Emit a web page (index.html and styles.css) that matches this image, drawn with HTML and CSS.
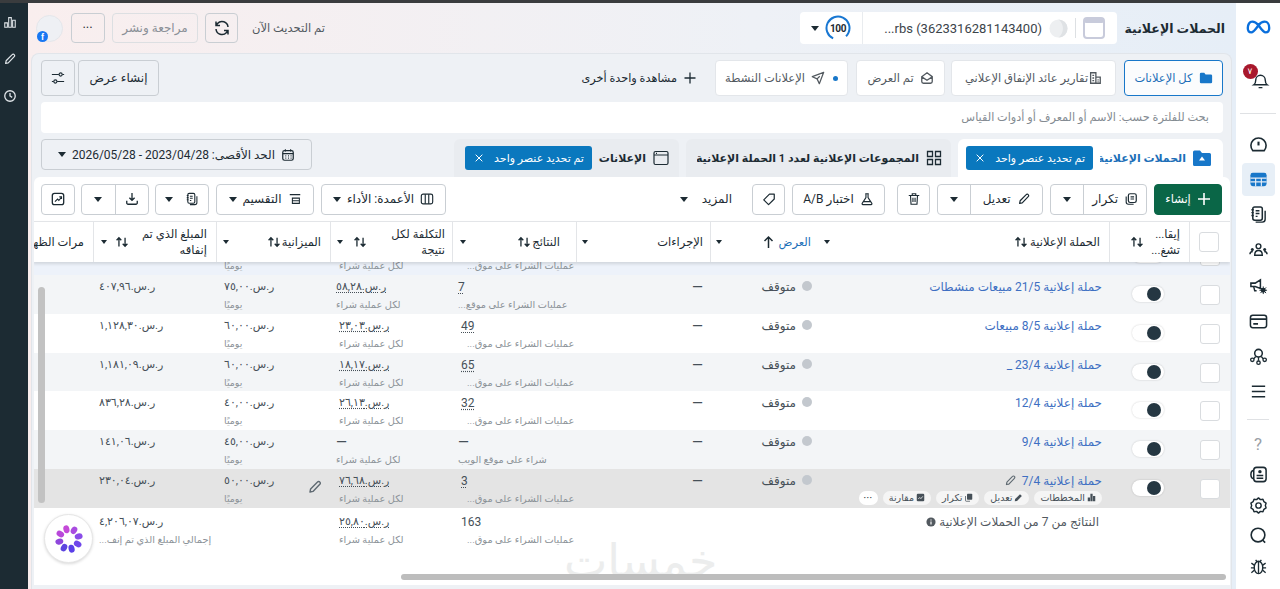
FILE: index.html
```html
<!DOCTYPE html>
<html lang="ar" dir="rtl">
<head>
<meta charset="utf-8">
<title>الحملات الإعلانية</title>
<link rel="stylesheet" href="styles.css">
</head>
<body>
<svg class="defs" aria-hidden="true">
  <symbol id="i-pen" viewBox="0 0 16 16"><path d="M3 13l.6-3L10.500 3a1.500 1.500 0 0 1 2.300 0 1.500 1.500 0 0 1 0 2.300L6 12.400z" fill="none" stroke="currentColor" stroke-width="1.400" stroke-linejoin="round"/></symbol>
  <symbol id="i-dup" viewBox="0 0 16 16"><rect x="5" y="2" width="9" height="10" rx="2" fill="none" stroke="currentColor" stroke-width="1.400"/><path d="M2.500 5v6.500A2.500 2.500 0 0 0 5 14h6M7.500 5.500h4M7.500 8h4" fill="none" stroke="currentColor" stroke-width="1.300"/></symbol>
  <symbol id="i-docs" viewBox="0 0 20 20"><rect x="4" y="2" width="10" height="14" rx="2" fill="none" stroke="currentColor" stroke-width="1.600"/><path d="M7 6h4M7 9h4M7 12h2M2.500 5h2.500M2.500 8h2.500M2.500 11h2.500M17 6v9a3 3 0 0 1-3 3H7" fill="none" stroke="currentColor" stroke-width="1.500"/></symbol>
  <symbol id="i-sort" viewBox="0 0 16 16"><path d="M4.500 13V3.500M1.800 6l2.700-2.800L7.200 6M11.500 3v9.500M8.800 10l2.700 2.800L14.200 10" fill="none" stroke="currentColor" stroke-width="1.500"/></symbol>
  <symbol id="i-x" viewBox="0 0 12 12"><path d="M2 2l8 8M10 2l-8 8" stroke="currentColor" stroke-width="1.200" fill="none"/></symbol>
</svg>
<div class="topline"></div>
<div class="app">
  <nav class="nav">
    <div class="nav-slot nav-meta"><svg class="meta" viewBox="0 0 28 18"><path d="M7 2.500C4 2.500 2 5.500 2 9.500c0 3 1.500 5 4 5 2.500 0 4-2.500 8-8 3-4 5-4 7-4 3 0 5 3 5 7 0 3-1.500 5-4 5-2.500 0-4.500-3-8-8C11.500 3.500 9.500 2.500 7 2.500z" fill="none" stroke="#0a6fdc" stroke-width="2.600"/></svg></div>
    <div class="nav-slot nav-bell">
      <svg class="ni" viewBox="0 0 20 20"><path d="M3 14.500c1.500-1 2-2.500 2-5a5 5 0 0 1 10 0c0 2.500.5 4 2 5zM8 17.500h4" fill="none" stroke="currentColor" stroke-width="1.500"/></svg>
      <span class="badge">٧</span>
    </div>
    <div class="nav-div"></div>
    <div class="nav-slot"><svg class="ni" viewBox="0 0 20 20"><path d="M4 16.500a8 8 0 1 1 12 0z" fill="none" stroke="currentColor" stroke-width="1.700"/><path d="M10 7v4" stroke="currentColor" stroke-width="2.200"/></svg></div>
    <div class="nav-slot nav-active"><svg class="ni" viewBox="0 0 20 20"><rect x="1.500" y="3" width="17" height="14" rx="2.500" fill="#1877c9"/><path d="M1.500 8.500h17M1.500 12.500h17M7 8.500V17M13 8.500V17" stroke="#e7eef6" stroke-width="1.200"/></svg></div>
    <div class="nav-slot"><svg class="ni" viewBox="0 0 20 20"><use href="#i-docs"/></svg></div>
    <div class="nav-slot"><svg class="ni" viewBox="0 0 20 20"><circle cx="10" cy="5.500" r="2.500" fill="none" stroke="currentColor" stroke-width="1.500"/><path d="M6 15c0-3 1.500-5 4-5s4 2 4 5z" fill="none" stroke="currentColor" stroke-width="1.500"/><circle cx="3.500" cy="9" r="1.600" fill="currentColor"/><circle cx="16.500" cy="9" r="1.600" fill="currentColor"/><path d="M1 14c0-2 1-3 3-3M19 14c0-2-1-3-3-3" fill="none" stroke="currentColor" stroke-width="1.500"/></svg></div>
    <div class="nav-slot"><svg class="ni" viewBox="0 0 20 20"><path d="M2 7.500h4.500L12 4v9L6.500 11H2z" fill="none" stroke="currentColor" stroke-width="1.600"/><path d="M5 11.500l1 4h2" fill="none" stroke="currentColor" stroke-width="1.500"/><circle cx="15" cy="15" r="2.600" fill="currentColor"/><path d="M15 11v8M11 15h8M12 12l6 6M18 12l-6 6" stroke="currentColor" stroke-width="1"/></svg></div>
    <div class="nav-slot"><svg class="ni" viewBox="0 0 20 20"><rect x="1.500" y="3.500" width="17" height="13" rx="2.500" fill="none" stroke="currentColor" stroke-width="1.600"/><path d="M1.500 7.500h17M4.500 12.500h5" stroke="currentColor" stroke-width="1.600"/></svg></div>
    <div class="nav-slot"><svg class="ni" viewBox="0 0 20 20"><circle cx="10" cy="6.500" r="4" fill="none" stroke="currentColor" stroke-width="1.600"/><circle cx="3.500" cy="13.500" r="1.800" fill="none" stroke="currentColor" stroke-width="1.400"/><circle cx="16.500" cy="13.500" r="1.800" fill="none" stroke="currentColor" stroke-width="1.400"/><circle cx="10" cy="16.500" r="1.800" fill="none" stroke="currentColor" stroke-width="1.400"/><path d="M10 10.500v4M7 10L5 12.500M13 10l2 2.500" stroke="currentColor" stroke-width="1.400"/></svg></div>
    <div class="nav-slot"><svg class="ni" viewBox="0 0 20 20"><path d="M3 4.500h14M3 10h14M3 15.500h14" stroke="currentColor" stroke-width="1.400"/></svg></div>
    <div class="nav-div nav-div2"></div>
    <div class="nav-slot2 nav-q">?</div>
    <div class="nav-slot2"><svg class="ni" viewBox="0 0 20 20"><rect x="5" y="2.500" width="13" height="15" rx="3" fill="none" stroke="currentColor" stroke-width="1.600"/><path d="M5 5.500C2.500 6 2 8 2 10s.5 4 3 4.500" fill="none" stroke="currentColor" stroke-width="1.600"/><circle cx="11.500" cy="7" r="1.800" fill="currentColor"/><path d="M8 11h7M8 14h7" stroke="currentColor" stroke-width="1.500"/></svg></div>
    <div class="nav-slot2"><svg class="ni" viewBox="0 0 20 20"><path d="M10 2l2 1.800 2.700-.3 1 2.500 2.300 1.500-.8 2.500.8 2.500-2.300 1.500-1 2.500-2.700-.3L10 18l-2-1.800-2.700.3-1-2.500L2 12.500 2.800 10 2 7.500 4.300 6l1-2.500 2.700.3z" fill="none" stroke="currentColor" stroke-width="1.500" stroke-linejoin="round"/><circle cx="10" cy="10" r="2.800" fill="none" stroke="currentColor" stroke-width="1.500"/></svg></div>
    <div class="nav-slot2"><svg class="ni" viewBox="0 0 20 20"><circle cx="9.500" cy="9.500" r="7.200" fill="none" stroke="currentColor" stroke-width="1.700"/><path d="M14.500 15l2.500 2.500" stroke="currentColor" stroke-width="1.700"/></svg></div>
    <div class="nav-slot2"><svg class="ni" viewBox="0 0 20 20"><ellipse cx="10" cy="11" rx="4.500" ry="6.500" fill="none" stroke="currentColor" stroke-width="1.500"/><path d="M10 4.500V17.500M5.500 8.500L2.500 6.500M5.500 11.500H2M5.500 14L2.500 16.500M14.500 8.500l3-2M14.500 11.500H18M14.500 14l3 2.500M7 3l1.500 2M13 3l-1.500 2" fill="none" stroke="currentColor" stroke-width="1.400"/></svg></div>
  </nav>

  <main class="main">
    <header class="head">
      <h1 class="title">الحملات الإعلانية</h1>
      <div class="account">
        <div class="acc-main">
          <svg class="acc-win" viewBox="0 0 22 22"><rect x="1" y="1" width="20" height="20" rx="3" fill="#fff" stroke="#c8cbdb" stroke-width="2"/><rect x="1" y="1" width="20" height="5" rx="2" fill="#c8cbdb"/></svg>
          <span class="acc-sep"></span>
          <svg class="acc-moon" viewBox="0 0 20 20"><circle cx="10" cy="10" r="9.500" fill="#edeff1"/><path d="M10 .5a9.500 9.500 0 0 1 0 19 12 12 0 0 0 0-19z" fill="#dfe2e5"/></svg>
          <span class="acc-name" dir="ltr">...rbs (3623316281143400)</span>
        </div>
        <div class="acc-score">
          <svg class="ring" viewBox="0 0 26 26"><circle cx="13" cy="13" r="11.500" fill="none" stroke="#1877d2" stroke-width="2" stroke-dasharray="58 14" transform="rotate(115 13 13)"/></svg>
          <span class="ring-num" dir="ltr">100</span>
          <span class="caret"></span>
        </div>
      </div>
      <div class="head-left">
        <span class="updated">تم التحديث الآن</span>
        <button class="btn btn-sq head-refresh"><svg class="ic18" viewBox="0 0 18 18"><path d="M15 8A6 6 0 0 0 4.500 4.500L3 6.500M3 10a6 6 0 0 0 10.500 3.500L15 11.500M3 2.500v4h4M15 15.500v-4h-4" fill="none" stroke="currentColor" stroke-width="1.500"/></svg></button>
        <button class="btn btn-review">مراجعة ونشر</button>
        <button class="btn btn-more">•••</button>
        <div class="avatar"><span class="fb">f</span></div>
      </div>
    </header>

    <section class="panel">
      <div class="views">
        <button class="view view-on"><svg class="ic14" viewBox="0 0 16 16"><path d="M1 3.500A1.500 1.500 0 0 1 2.500 2h3.500l1.500 2h6A1.500 1.500 0 0 1 15 5.500v7a1.500 1.500 0 0 1-1.500 1.500h-11A1.500 1.500 0 0 1 1 12.500z" fill="#1877c9"/></svg>كل الإعلانات</button>
        <button class="view view-roi"><svg class="ic14" viewBox="0 0 16 16"><path d="M3 2h6v12H3zM9 7h5v7H9zM5 5h2M5 8h2M5 11h2M11 10h1M11 12h1" fill="none" stroke="currentColor" stroke-width="1.500"/></svg>تقارير عائد الإنفاق الإعلاني</button>
        <button class="view view-seen"><svg class="ic14" viewBox="0 0 16 16"><path d="M2 6.500L8 2l6 4.500V12a2 2 0 0 1-2 2H4a2 2 0 0 1-2-2zM2.500 7L8 10.500 13.500 7" fill="none" stroke="currentColor" stroke-width="1.500"/></svg>تم العرض</button>
        <button class="view view-act"><i class="dot-blue"></i><svg class="ic14" viewBox="0 0 16 16"><path d="M14.500 1.500L1.500 6.500l5.500 2.500 2.500 5.500zM7 9l3-3" fill="none" stroke="currentColor" stroke-width="1.400" stroke-linejoin="round"/></svg>الإعلانات النشطة</button>
        <button class="view-add"><svg class="ic14" viewBox="0 0 14 14"><path d="M7 1.500v11M1.500 7h11" stroke="currentColor" stroke-width="1.300"/></svg>مشاهدة واحدة أخرى</button>
        <div class="views-left">
          <button class="btn btn-view">إنشاء عرض</button>
          <button class="btn btn-sq btn-sliders"><svg class="ic14" viewBox="0 0 16 16"><path d="M1 4h8M13 4h2M1 12h2M7 12h8" stroke="currentColor" stroke-width="1.300"/><circle cx="11" cy="4" r="1.800" fill="none" stroke="currentColor" stroke-width="1.300"/><circle cx="5" cy="12" r="1.800" fill="none" stroke="currentColor" stroke-width="1.300"/></svg></button>
        </div>
      </div>

      <div class="search">بحث للفلترة حسب: الاسم أو المعرف أو أدوات القياس</div>

      <div class="tabs">
        <div class="tab tab-on">
          <svg class="ic18 tab-folder" viewBox="0 0 18 18"><path d="M0 3a1.500 1.500 0 0 1 1.500-1.500H7L9 4h7.500A1.500 1.500 0 0 1 18 5.500v10a1.500 1.500 0 0 1-1.500 1.500h-15A1.500 1.500 0 0 1 0 15.500z" fill="#1877c9"/><path d="M9 7.500l3 4H6z" fill="#fff"/></svg>
          <span class="tab-name tab-name1">الحملات الإعلانية</span>
          <span class="chip"><span>تم تحديد عنصر واحد</span><svg class="ic10" viewBox="0 0 12 12"><use href="#i-x"/></svg></span>
        </div>
        <div class="tab tab-mid">
          <svg class="ic16" viewBox="0 0 16 16"><path d="M1.500 1.500h5v5h-5zM9.500 1.500h5v5h-5zM1.500 9.500h5v5h-5zM9.500 9.500h5v5h-5z" fill="none" stroke="currentColor" stroke-width="1.300"/></svg>
          <span class="tab-name tab-name2">المجموعات الإعلانية لعدد 1 الحملة الإعلانية</span>
        </div>
        <div class="tab tab-ads">
          <svg class="ic16" viewBox="0 0 16 16"><rect x="1" y="1.500" width="14" height="13" rx="1.500" fill="none" stroke="currentColor" stroke-width="1.200"/><path d="M1 5h14M3 3.300h1" stroke="currentColor" stroke-width="1.200"/></svg>
          <span class="tab-name">الإعلانات</span>
          <span class="chip"><span>تم تحديد عنصر واحد</span><svg class="ic10" viewBox="0 0 12 12"><use href="#i-x"/></svg></span>
        </div>
        <button class="btn btn-date"><svg class="ic14" viewBox="0 0 16 16"><rect x="2" y="3" width="12" height="11" rx="2" fill="none" stroke="currentColor" stroke-width="1.400"/><path d="M2 6.500h12M5 1.500V4M11 1.500V4M5 9h1M8 9h1M11 9h1M5 11.500h1M8 11.500h1M11 11.500h1" stroke="currentColor" stroke-width="1.300"/></svg><span>الحد الأقصى: <bdi dir="ltr">2026/05/28 - 2023/04/28</bdi></span><span class="caret"></span></button>
      </div>

      <div class="card">
        <div class="toolbar">
          <button class="btn btn-create"><svg class="ic14" viewBox="0 0 14 14"><path d="M7 1v12M1 7h12" stroke="currentColor" stroke-width="1.600"/></svg>إنشاء</button>
          <div class="split split-dup"><button class="seg seg-main"><svg class="ic14" viewBox="0 0 16 16"><use href="#i-dup"/></svg>تكرار</button><button class="seg seg-car"><span class="caret"></span></button></div>
          <div class="split split-edit"><button class="seg seg-main"><svg class="ic14" viewBox="0 0 16 16"><use href="#i-pen"/></svg>تعديل</button><button class="seg seg-car"><span class="caret"></span></button></div>
          <button class="btn btn-sq btn-del"><svg class="ic14" viewBox="0 0 16 16"><path d="M2 4h12M6 4V2h4v2M4 4l.6 10h6.800L12 4M6.800 6.500v5M9.200 6.500v5" fill="none" stroke="currentColor" stroke-width="1.300"/></svg></button>
          <span class="tb-sep"></span>
          <button class="btn btn-ab"><svg class="ic14" viewBox="0 0 16 16"><path d="M6 2h4M6.800 2v4.500L2.500 13a1 1 0 0 0 .8 1.500h9.400a1 1 0 0 0 .8-1.500L9.200 6.500V2M4.500 11h7" fill="none" stroke="currentColor" stroke-width="1.300"/></svg>اختبار A/B</button>
          <button class="btn btn-sq btn-tag"><svg class="ic14" viewBox="0 0 16 16"><path d="M2 9l6.500-6.500H14V8l-6.500 6.500zM11 5h.1" fill="none" stroke="currentColor" stroke-width="1.400" stroke-linejoin="round"/></svg></button>
          <button class="btn-plain">المزيد<span class="caret"></span></button>
          <button class="btn btn-cols"><svg class="ic14" viewBox="0 0 16 16"><rect x="1.500" y="2.500" width="13" height="11" rx="2" fill="none" stroke="currentColor" stroke-width="1.300"/><path d="M6 2.500v11M10 2.500v11" stroke="currentColor" stroke-width="1.300"/></svg>الأعمدة: الأداء<span class="caret"></span></button>
          <button class="btn btn-break"><svg class="ic14" viewBox="0 0 16 16"><path d="M2 3h12M5 7h8v6H5zM5 10h8" fill="none" stroke="currentColor" stroke-width="1.200"/></svg>التقسيم<span class="caret"></span></button>
          <button class="btn btn-rep"><svg class="ic14" viewBox="0 0 20 20"><use href="#i-docs"/></svg><span class="caret"></span></button>
          <div class="split split-exp"><button class="seg seg-ico"><svg class="ic14" viewBox="0 0 16 16"><path d="M8 1v8M5 6.500L8 9.500l3-3M2 10v2.500A1.500 1.500 0 0 0 3.500 14h9a1.500 1.500 0 0 0 1.500-1.500V10" fill="none" stroke="currentColor" stroke-width="1.500"/></svg></button><button class="seg seg-car"><span class="caret"></span></button></div>
          <button class="btn btn-sq btn-chart"><svg class="ic14" viewBox="0 0 16 16"><rect x="1.500" y="1.500" width="13" height="13" rx="2.500" fill="none" stroke="currentColor" stroke-width="1.500"/><path d="M4.500 11l3-3 1.500 1.500 3-3.500M9.500 5.500H12V8" fill="none" stroke="currentColor" stroke-width="1.300"/></svg></button>
        </div>

        <div class="thead grid">
          <div class="th th-check"><span class="box"></span></div>
          <div class="th th-toggle"><span class="th-text">إيقا...<br>تشغ...</span><svg class="sort" viewBox="0 0 16 16"><use href="#i-sort"/></svg></div>
          <div class="th th-name"><span class="th-text">الحملة الإعلانية</span><svg class="sort" viewBox="0 0 16 16"><use href="#i-sort"/></svg><span class="caret caret-s"></span></div>
          <div class="th th-del"><span class="th-text">العرض</span><svg class="sort" viewBox="0 0 12 16"><path d="M6 14V3M2 7l4-4 4 4" fill="none" stroke="currentColor" stroke-width="1.500"/></svg><span class="caret caret-s"></span></div>
          <div class="th"><span class="th-text">الإجراءات</span><span class="caret caret-s"></span></div>
          <div class="th th-res"><span class="th-text">النتائج</span><svg class="sort" viewBox="0 0 16 16"><use href="#i-sort"/></svg><span class="caret caret-s"></span></div>
          <div class="th th-cost"><span class="th-text">التكلفة لكل نتيجة</span><svg class="sort" viewBox="0 0 16 16"><use href="#i-sort"/></svg><span class="caret caret-s"></span></div>
          <div class="th th-bud"><span class="th-text">الميزانية</span><svg class="sort" viewBox="0 0 16 16"><use href="#i-sort"/></svg><span class="caret caret-s"></span></div>
          <div class="th th-spent"><span class="th-text">المبلغ الذي تم إنفاقه</span><svg class="sort" viewBox="0 0 16 16"><use href="#i-sort"/></svg><span class="caret caret-s"></span></div>
          <div class="th th-imp"><span class="th-text">مرات الظهور</span></div>
        </div>

        <div class="tbody">
          <div class="clip">
            <div class="row grid">
              <div class="c c-check"><span class="box"></span></div>
              <div class="c c-toggle"><span class="toggle"></span></div>
              <div class="c"></div>
              <div class="c"></div>
              <div class="c"></div>
              <div class="c c-num c-res"><span class="val">&nbsp;</span><span class="sub sub-r">عمليات الشراء على موق...</span></div>
              <div class="c c-num c-cost"><span class="val">&nbsp;</span><span class="sub sub-in">لكل عملية شراء</span></div>
              <div class="c c-num"><span class="val">&nbsp;</span><span class="sub sub-2">يوميًا</span></div>
              <div class="c"></div>
              <div class="c"></div>
            </div>
          </div>

          <div class="row grid row-alt">
            <div class="c c-check"><span class="box"></span></div>
            <div class="c c-toggle"><span class="toggle"></span></div>
            <div class="c c-name"><a class="link">حملة إعلانية 21/5 مبيعات منشطات</a></div>
            <div class="c c-del"><i class="dot"></i>متوقف</div>
            <div class="c c-dash">—</div>
            <div class="c c-num c-res"><span class="val val-u">7</span><span class="sub">عمليات الشراء على موقع...</span></div>
            <div class="c c-num c-cost"><span class="val val-u">ر.س.٥٨,٢٨</span><span class="sub">لكل عملية شراء</span></div>
            <div class="c c-num"><span class="val">ر.س.٧٥,٠٠</span><span class="sub sub-2">يوميًا</span></div>
            <div class="c c-num"><span class="val">ر.س.٤٠٧,٩٦</span></div>
            <div class="c"></div>
          </div>

          <div class="row grid">
            <div class="c c-check"><span class="box"></span></div>
            <div class="c c-toggle"><span class="toggle"></span></div>
            <div class="c c-name"><a class="link">حملة إعلانية 8/5 مبيعات</a></div>
            <div class="c c-del"><i class="dot"></i>متوقف</div>
            <div class="c c-dash">—</div>
            <div class="c c-num c-res"><span class="val val-u val-in">49</span><span class="sub sub-r">عمليات الشراء على موق...</span></div>
            <div class="c c-num c-cost"><span class="val val-u val-in">ر.س.٢٣,٠٣</span><span class="sub sub-in">لكل عملية شراء</span></div>
            <div class="c c-num"><span class="val">ر.س.٦٠,٠٠</span><span class="sub sub-2">يوميًا</span></div>
            <div class="c c-num"><span class="val">ر.س.١,١٢٨,٣٠</span></div>
            <div class="c"></div>
          </div>

          <div class="row grid row-alt">
            <div class="c c-check"><span class="box"></span></div>
            <div class="c c-toggle"><span class="toggle"></span></div>
            <div class="c c-name"><a class="link">حملة إعلانية 23/4 _</a></div>
            <div class="c c-del"><i class="dot"></i>متوقف</div>
            <div class="c c-dash">—</div>
            <div class="c c-num c-res"><span class="val val-u val-in">65</span><span class="sub sub-r">عمليات الشراء على موق...</span></div>
            <div class="c c-num c-cost"><span class="val val-u val-in">ر.س.١٨,١٧</span><span class="sub sub-in">لكل عملية شراء</span></div>
            <div class="c c-num"><span class="val">ر.س.٦٠,٠٠</span><span class="sub sub-2">يوميًا</span></div>
            <div class="c c-num"><span class="val">ر.س.١,١٨١,٠٩</span></div>
            <div class="c"></div>
          </div>

          <div class="row grid">
            <div class="c c-check"><span class="box"></span></div>
            <div class="c c-toggle"><span class="toggle"></span></div>
            <div class="c c-name"><a class="link">حملة إعلانية 12/4</a></div>
            <div class="c c-del"><i class="dot"></i>متوقف</div>
            <div class="c c-dash">—</div>
            <div class="c c-num c-res"><span class="val val-u val-in">32</span><span class="sub sub-r">عمليات الشراء على موق...</span></div>
            <div class="c c-num c-cost"><span class="val val-u val-in">ر.س.٢٦,١٣</span><span class="sub sub-in">لكل عملية شراء</span></div>
            <div class="c c-num"><span class="val">ر.س.٤٠,٠٠</span><span class="sub sub-2">يوميًا</span></div>
            <div class="c c-num"><span class="val">ر.س.٨٣٦,٢٨</span></div>
            <div class="c"></div>
          </div>

          <div class="row grid row-alt">
            <div class="c c-check"><span class="box"></span></div>
            <div class="c c-toggle"><span class="toggle"></span></div>
            <div class="c c-name"><a class="link">حملة إعلانية 9/4</a></div>
            <div class="c c-del"><i class="dot"></i>متوقف</div>
            <div class="c c-dash">—</div>
            <div class="c c-num c-res"><span class="val val-dash">—</span><span class="sub">شراء على موقع الويب</span></div>
            <div class="c c-num c-cost"><span class="val val-dash">—</span><span class="sub">لكل عملية شراء</span></div>
            <div class="c c-num"><span class="val">ر.س.٤٥,٠٠</span><span class="sub sub-2">يوميًا</span></div>
            <div class="c c-num"><span class="val">ر.س.١٤١,٠٦</span></div>
            <div class="c"></div>
          </div>

          <div class="row grid row-hover">
            <div class="c c-check"><span class="box"></span></div>
            <div class="c c-toggle"><span class="toggle"></span></div>
            <div class="c c-name">
              <div class="name-line"><a class="link">حملة إعلانية 7/4</a><svg class="pen" viewBox="0 0 16 16"><use href="#i-pen"/></svg></div>
              <div class="pills">
                <span class="pill"><svg class="ic9" viewBox="0 0 12 12"><path d="M1 11V6h3v5zM4.500 11V1h3v10zM8 11V4h3v7z" fill="currentColor"/></svg>المخططات</span>
                <span class="pill"><svg class="ic9" viewBox="0 0 12 12"><path d="M1 11l.5-3L8 1.500l2.500 2.500L4 10.500z" fill="currentColor"/></svg>تعديل</span>
                <span class="pill"><svg class="ic9" viewBox="0 0 12 12"><rect x="4" y="1" width="7" height="8" rx="1" fill="currentColor"/><path d="M2 4v6a1 1 0 0 0 1 1h5" fill="none" stroke="currentColor"/></svg>تكرار</span>
                <span class="pill"><svg class="ic9" viewBox="0 0 12 12"><rect x="1" y="1" width="10" height="10" rx="1.500" fill="currentColor"/><path d="M3 8l2-2 1.500 1.500L9 4.500" fill="none" stroke="#fff"/></svg>مقارنة</span>
                <span class="pill pill-more">•••</span>
              </div>
            </div>
            <div class="c c-del"><i class="dot"></i>متوقف</div>
            <div class="c c-dash">—</div>
            <div class="c c-num c-res"><span class="val val-u val-in">3</span><span class="sub sub-r">عمليات الشراء على موق...</span></div>
            <div class="c c-num c-cost"><span class="val val-u val-in">ر.س.٧٦,٦٨</span><span class="sub sub-in">لكل عملية شراء</span></div>
            <div class="c c-num c-bud-edit"><svg class="pen pen-bud" viewBox="0 0 16 16"><use href="#i-pen"/></svg><span class="val">ر.س.٥٠,٠٠</span><span class="sub sub-2">يوميًا</span></div>
            <div class="c c-num"><span class="val">ر.س.٢٣٠,٠٤</span></div>
            <div class="c"></div>
          </div>

          <div class="totals grid">
            <div class="t t-sum">النتائج من 7 من الحملات الإعلانية <svg class="ic10b" viewBox="0 0 12 12"><circle cx="6" cy="6" r="5.500" fill="currentColor"/><path d="M6 5.500V9M6 3v1.200" stroke="#fff" stroke-width="1.400"/></svg></div>
            <div class="c c-num c-res t"><span class="val val-in">163</span><span class="sub sub-r">عمليات الشراء على موق...</span></div>
            <div class="c c-num c-cost t"><span class="val val-u val-in">ر.س.٢٥,٨٠</span><span class="sub sub-in">لكل عملية شراء</span></div>
            <div class="c t"></div>
            <div class="c c-num t"><span class="val">ر.س.٤,٢٠٦,٠٧</span><span class="sub">إجمالي المبلغ الذي تم إنف...</span></div>
            <div class="c t"></div>
          </div>
        </div>

        <div class="watermark">خمسات</div>
        <div class="vbar"></div>
        <div class="hbar"></div>
        <div class="assistant"><svg viewBox="0 0 30 30"><g transform="translate(15 15)"><ellipse cy="-10" rx="3" ry="4" fill="#c44ad8" transform="rotate(-15)"/><ellipse cy="-10" rx="3" ry="4" fill="#a94ce0" transform="rotate(30)"/><ellipse cy="-10" rx="3" ry="4" fill="#8a4ce8" transform="rotate(75)"/><ellipse cy="-10" rx="3" ry="4" fill="#6f46ea" transform="rotate(120)"/><ellipse cy="-10" rx="3" ry="4" fill="#5a3fe8" transform="rotate(165)"/><ellipse cy="-10" rx="3" ry="4" fill="#5c45e0" transform="rotate(210)"/><ellipse cy="-10" rx="3" ry="4" fill="#8f47dc" transform="rotate(255)"/><ellipse cy="-10" rx="3" ry="4" fill="#b848da" transform="rotate(300)"/></g></svg></div>
      </div>
    </section>
  </main>

  <aside class="rail">
    <svg class="ri" viewBox="0 0 16 16"><path d="M2 9h3v5H2zM6.500 3h3v11h-3zM11 6h3v8h-3z" fill="none" stroke="currentColor" stroke-width="1.200"/></svg>
    <svg class="ri" viewBox="0 0 16 16"><path d="M3 13l.6-3L10.500 3a1.500 1.500 0 0 1 2.300 0 1.500 1.500 0 0 1 0 2.300L6 12.400z" fill="none" stroke="currentColor" stroke-width="1.400" stroke-linejoin="round"/></svg>
    <svg class="ri" viewBox="0 0 16 16"><circle cx="8" cy="8" r="6" fill="none" stroke="currentColor" stroke-width="1.500"/><path d="M8 4.500V8l2.500 1.500" fill="none" stroke="currentColor" stroke-width="1.500"/></svg>
  </aside>
</div>
</body>
</html>
```

FILE: styles.css
```css
* { box-sizing: border-box; }
html, body { margin: 0; height: 100%; }
body {
  width: 1280px;
  height: 589px;
  overflow: hidden;
  background: #fff;
  color: #1c2b33;
  font-family: Roboto, "DejaVu Sans", sans-serif;
  font-size: 12px;
}
button { font: inherit; color: inherit; background: none; border: 0; padding: 0; }
.defs { position: absolute; width: 0; height: 0; }
.topline { height: 3px; background: #3a3c3e; }
.app { display: flex; height: 586px; }

/* right nav */
.nav { width: 44px; flex: none; display: flex; flex-direction: column; align-items: center; background: #fff; color: #1c2b33; }
.nav-slot { width: 33px; height: 35.4px; display: flex; align-items: center; justify-content: center; flex: none; position: relative; }
.nav-slot2 { width: 33px; height: 30.500px; display: flex; align-items: center; justify-content: center; flex: none; }
.nav-meta { margin-top: 7px; }
.nav-bell { margin-top: 17px; }
.nav-bell .ni { margin-left: 4px; }
.nav-div { width: 36px; height: 1px; background: #dfe1e4; margin: 15px 0 13px; flex: none; }
.nav-div2 { width: 22px; margin: 9px 0 8px; }
.nav-active { background: #e7eff7; border-radius: 4px; height: 33px; margin: 1px 0; }
.nav-q { color: #9aa0a6; font-size: 17px; height: 32px; }
.meta { width: 25px; height: 17px; }
.ni { width: 19px; height: 19px; }
.badge { position: absolute; top: 2px; right: 17px; width: 15px; height: 15px; border-radius: 50%; background: #a8182c; color: #fff; font-size: 9px; line-height: 15px; text-align: center; }

/* left dark rail */
.rail { width: 28px; flex: none; background: #1c2b33; color: #dfe4e8; display: flex; flex-direction: column; align-items: flex-end; gap: 23px; padding: 12px 0 0; }
.rail .ri { width: 14px; height: 14px; margin-left: 3px; margin-right: 11px; }

/* main */
.main { width: 1208px; flex: none; display: flex; flex-direction: column; background: linear-gradient(270deg, #e6eef7 0%, #eef1f6 40%, #f9eeee 100%); }
.head { height: 50px; flex: none; display: flex; align-items: center; padding: 0 11px 0 8px; }
.title { margin: 0 0 0 8px; font-size: 12.500px; font-weight: 700; width: 100px; white-space: nowrap; color: #1c2b33; }
.account { display: flex; height: 32px; background: #fff; border-radius: 4px; }
.acc-main { width: 255px; display: flex; align-items: center; padding: 0 12px 0 0; border-left: 1px solid #e9ecef; }
.acc-win { width: 22px; height: 22px; flex: none; }
.acc-sep { width: 1px; height: 20px; background: #dde0e3; margin: 0 7px; }
.acc-moon { width: 19px; height: 19px; flex: none; margin-left: 7px; }
.acc-name { font-size: 13px; color: #3b444a; white-space: nowrap; }
.acc-score { width: 62px; position: relative; display: flex; align-items: center; padding-right: 11px; gap: 0; }
.ring { width: 26px; height: 26px; flex: none; }
.ring-num { position: absolute; right: 14px; width: 20px; text-align: center; font-size: 10px; font-weight: 700; letter-spacing: -.4px; color: #1c2b33; }
.acc-score .caret { margin-right: 6px; }
.caret { display: inline-block; width: 0; height: 0; border-left: 4.500px solid transparent; border-right: 4.500px solid transparent; border-top: 5px solid #1c2b33; flex: none; }
.caret-s { border-left-width: 3.500px; border-right-width: 3.500px; border-top-width: 4px; margin-right: auto; }
.head-left { margin-right: auto; display: flex; align-items: center; }
.updated { color: #52595f; margin-left: 14px; font-size: 11.500px; }
.btn { display: inline-flex; align-items: center; justify-content: center; gap: 6px; border: 1px solid #c9ced3; border-radius: 4px; background: transparent; height: 31px; white-space: nowrap; flex: none; }
.btn-sq { width: 34px; }
.head-refresh { margin-left: 7px; width: 33px; height: 30px; }
.btn-review { width: 86px; color: #8a9097; margin-left: 7px; height: 30px; border-color: #dcdfe2; }
.btn-more { width: 34px; height: 30px; margin-left: 8px; font-size: 7px; letter-spacing: 1px; }
.avatar { width: 27px; height: 27px; border-radius: 50%; background: #eef0f4; border: 1px solid #e4e6ea; position: relative; }
.fb { position: absolute; left: 0; bottom: -1px; width: 11px; height: 11px; border-radius: 50%; background: #1877f2; color: #fff; font-size: 9px; font-weight: 700; line-height: 12px; text-align: center; font-family: "Liberation Sans", sans-serif; }
.ic18 { width: 18px; height: 18px; flex: none; }
.ic16 { width: 16px; height: 16px; flex: none; }
.ic14 { width: 14px; height: 14px; flex: none; }
.ic10 { width: 10px; height: 10px; flex: none; }
.ic10b { width: 10px; height: 10px; vertical-align: -1px; }
.ic9 { width: 9px; height: 9px; flex: none; }

/* panel */
.panel { flex: 1; margin: 0 4px 0 3px; background: #eef1f5; border-radius: 8px 8px 0 0; border: 1px solid #e1e5ea; border-bottom: 0; padding: 6px 8px 0 9px; min-height: 0; }
.views { display: flex; align-items: center; gap: 8px; height: 36px; }
.view { height: 36px; display: flex; align-items: center; justify-content: center; gap: 6px; background: #fff; border: 1px solid #e3e6ea; border-radius: 4px; white-space: nowrap; color: #52595f; flex: none; font-size: 11.500px; }
.view-on { width: 99px; border-color: #1877c9; color: #1d6fb8; font-weight: 500; background: #fbfcfd; }
.view-roi { width: 165px; gap: 0; margin-left: -2px; }
.view-seen { width: 89px; }
.view-act { width: 133px; }
.dot-blue { width: 5px; height: 5px; border-radius: 50%; background: #1877c9; margin-left: 2px; }
.view-add { display: flex; align-items: center; gap: 6px; margin-right: 10px; color: #1c2b33; font-weight: 500; white-space: nowrap; font-size: 11.300px; }
.views-left { margin-right: auto; display: flex; gap: 3px; }
.btn-view { width: 81px; height: 36px; font-weight: 500; }
.btn-sliders { height: 36px; }
.search { height: 31px; margin-top: 6px; background: #fff; border-radius: 4px; line-height: 31px; padding-right: 14px; color: #848b92; font-size: 11.300px; white-space: nowrap; overflow: hidden; }
.tabs { display: flex; align-items: flex-start; gap: 7px; height: 38px; margin-top: 6px; }
.tab { height: 38px; border-radius: 6px 6px 0 0; background: #e9ecf0; display: flex; align-items: center; gap: 7px; padding: 0 11px 0 0; flex: none; overflow: hidden; font-weight: 700; }
.tab-on { width: 265px; background: #fff; padding-right: 12px; color: #1d6fb8; }
.tab-mid { width: 265px; padding-right: 9px; }
.tab-ads { width: 225px; padding-right: 10px; }
.tab-name { white-space: nowrap; font-size: 11px; }
.tab-name1 { width: 86px; overflow: hidden; flex: none; }
.tab-name2 { width: 222px; overflow: hidden; flex: none; }
.chip { height: 24px; width: 127px; display: flex; align-items: center; justify-content: space-between; padding: 0 8px 0 9px; border-radius: 3px; background: #0a78be; color: #fff; font-size: 11px; font-weight: 400; white-space: nowrap; flex: none; }
.btn-date { width: 271px; margin-right: auto; gap: 6px; font-size: 12px; }
.card { position: relative; height: 408px; margin: 0 -7px 0 -7px; background: #fff; border-radius: 6px 6px 0 0; overflow: hidden; }
.toolbar { display: flex; align-items: center; height: 44px; padding: 0 8px 0 7px; }
.toolbar .btn { height: 31px; background: #fff; }
.btn-create { width: 68px; color: #fff; background: #0a6647 !important; border-color: #0a6647; font-weight: 500; font-size: 11.500px; margin-left: 7px; }
.split { display: flex; height: 31px; border: 1px solid #c9ced3; border-radius: 4px; flex: none; }
.seg { display: flex; align-items: center; justify-content: center; gap: 6px; }
.seg-main { border-left: 1px solid #c9ced3; }
.seg-car { width: 33px; }
.split-dup { width: 97px; margin-left: 7px; }
.split-dup .seg-main { width: 64px; }
.split-edit { width: 106px; margin-left: 7px; }
.split-edit .seg-main { width: 73px; }
.btn-del { width: 33px; margin-left: 6px; }
.tb-sep { width: 1px; height: 31px; background: #e4e6ea; margin-left: 6px; }
.btn-ab { width: 93px; margin-left: 7px; }
.btn-tag { width: 33px; margin-left: 20px; }
.btn-plain { display: flex; align-items: center; gap: 14px; width: 52px; flex: none; margin-left: 234px; white-space: nowrap; }
.btn-cols { width: 125px; margin-left: 7px; }
.btn-break { width: 98px; margin-left: 7px; }
.btn-rep { width: 54px; margin-left: 6px; gap: 12px; }
.split-exp { width: 68px; margin-left: 6px; }
.seg-ico { width: 34px; border-left: 1px solid #c9ced3; }
.btn-chart { margin-left: 0; }

/* table */
.grid { display: grid; grid-template-columns: 41px 80px 290px 109px 134px 124px 122px 114px 123px 60px; width: 1197px; }
.thead { height: 41px; border-top: 1px solid #e3e5e8; box-shadow: 0 2px 3px rgba(0, 0, 0, .12); position: relative; z-index: 2; background: #fff; }
.th { display: flex; align-items: center; gap: 0; padding: 0 7px 0 5px; border-left: 1px solid #e3e5e8; font-weight: 500; font-size: 11.500px; line-height: 16px; min-width: 0; overflow: hidden; }
.th-text { flex: none; }
.sort { width: 14px; height: 14px; flex: none; color: #1c2b33; }
.th-check { justify-content: center; }
.th-toggle { padding-right: 9px; gap: 7px; font-weight: 400; }
.th-name { gap: 2px; padding-right: 9px; border-left: 0; }
.th-del { color: #1d6fb8; gap: 4px; padding-right: 8px; }
.th-del .sort { width: 13px; height: 16px; }
.th-del .caret { border-top-color: #1c2b33; }
.th-res { padding-right: 16px; padding-left: 7px; gap: 1px; }
.th-cost { padding-right: 7px; padding-left: 6px; }
.th-cost .th-text { width: 72px; white-space: normal; }
.th-cost .sort { margin-right: 6px; }
.th-bud { padding-right: 9px; padding-left: 6px; gap: 1px; }
.th-spent { padding-right: 9px; padding-left: 7px; }
.th-spent .th-text { width: 78px; white-space: normal; }
.th-imp { border-left: 0; padding-right: 9px; }
.box { display: block; width: 20px; height: 20px; border: 1px solid #d9dcdf; border-radius: 3px; background: #fff; }

.tbody { height: 324px; overflow: hidden; background: #fff; }
.clip { height: 13px; overflow: hidden; background: #edf2fa; }
.clip .row { margin-top: -26px; height: 39px; }
.row { height: 38.800px; }
.row-alt { background: #f3f5f7; }
.row-hover { background: #e4e4e4; }
.c { min-width: 0; padding-top: 4px; line-height: 16px; font-size: 12px; white-space: nowrap; position: relative; }
.c-check { display: flex; justify-content: center; padding-top: 10px; }
.c-toggle { display: flex; justify-content: flex-start; padding: 11px 25px 0 0; }
.toggle { width: 32px; height: 16px; border-radius: 8px; background: #fff; box-shadow: 0 0 2px rgba(0, 0, 0, .2); position: relative; display: block; flex: none; }
.toggle::after { content: ""; position: absolute; right: 3px; top: 1px; width: 14px; height: 14px; border-radius: 50%; background: #253742; }
.c-name { padding-right: 7px; }
.link { color: #3e6fc2; font-size: 12px; }
.c-del { padding-right: 7px; display: flex; align-items: flex-start; gap: 6px; color: #465058; }
.dot { width: 10px; height: 10px; border-radius: 50%; background: #c3c8ce; margin-top: 2px; flex: none; }
.c-dash { padding-right: 7px; color: #465058; font-size: 14px; }
.c-num { display: flex; flex-direction: column; align-items: flex-end; padding-left: 6px; }
.row .c:nth-child(8) { padding-left: 8px; }
.val { display: block; color: #465058; font-size: 11px; }
.c-res .val { font-size: 12px; }
.c-res .val-dash, .val-dash { font-size: 14px; }
.val-u { text-decoration: underline dotted #465058; text-underline-offset: 2px; }
.val-in { margin-left: 3px; }
.sub { display: block; color: #8b9298; font-size: 9.800px; letter-spacing: -.2px; margin-top: 2px; }
.sub-in { margin-left: 3px; }
.sub-r { margin-left: 9px; }
.sub-2 { font-size: 9.500px; }
.name-line { display: flex; align-items: center; gap: 5px; height: 16px; }
.pen { width: 13px; height: 13px; color: #5f6a72; flex: none; }
.pen-bud { position: absolute; right: 7px; top: 10px; width: 16px; height: 16px; }
.pills { display: flex; gap: 5px; margin-top: 2px; }
.pill { display: flex; align-items: center; gap: 2px; height: 14px; padding: 0 6px; background: #f5f5f5; border-radius: 7px; font-size: 9.500px; color: #465058; line-height: 14px; }
.pill-more { padding: 0 5px; font-size: 6px; background: #fff; color: #1c2b33; letter-spacing: 1px; }

.totals { height: 46px; }
.t { padding-top: 6px; }
.t-sum { grid-column: 1 / span 5; padding-right: 131px; color: #52595f; white-space: nowrap; line-height: 16px; }

.watermark { position: absolute; left: 530px; top: 359px; font-size: 46px; line-height: 50px; color: #eceded; letter-spacing: 3px; z-index: 0; }
.vbar { position: absolute; left: 4px; top: 110px; width: 7px; height: 216px; border-radius: 4px; background: #c2c2c2; z-index: 3; }
.hbar { position: absolute; left: 367px; top: 397px; width: 825px; height: 6px; border-radius: 3px; background: #bdbdbd; z-index: 3; }
.assistant { position: absolute; left: 10px; top: 337px; width: 49px; height: 49px; border-radius: 50%; background: #fff; border: 1px solid #e6e6e6; box-shadow: 0 1px 3px rgba(0, 0, 0, .15); display: flex; align-items: center; justify-content: center; z-index: 4; }
.assistant svg { width: 30px; height: 30px; }
```
